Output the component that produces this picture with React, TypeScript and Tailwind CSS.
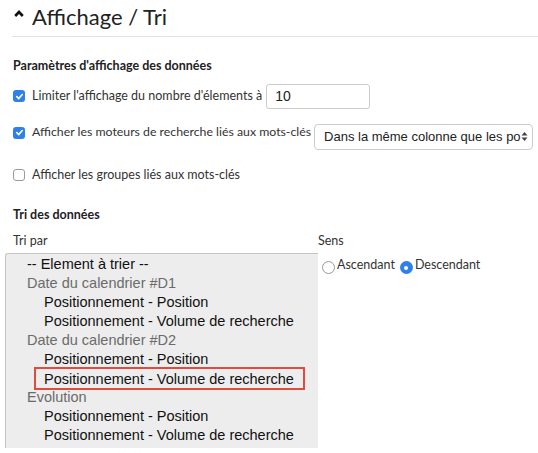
import React from "react";

// Options of the sort listbox
const options = [
  { label: "-- Element à trier --", kind: "item", indent: false },
  { label: "Date du calendrier #D1", kind: "group" },
  { label: "Positionnement - Position", kind: "item", indent: true },
  { label: "Positionnement - Volume de recherche", kind: "item", indent: true },
  { label: "Date du calendrier #D2", kind: "group" },
  { label: "Positionnement - Position", kind: "item", indent: true },
  { label: "Positionnement - Volume de recherche", kind: "item", indent: true, selected: true },
  { label: "Evolution", kind: "group" },
  { label: "Positionnement - Position", kind: "item", indent: true },
  { label: "Positionnement - Volume de recherche", kind: "item", indent: true },
];

function Check({ checked }: { checked: boolean }) {
  return checked ? (
    <span className="w-[12px] h-[12px] rounded-[3px] bg-[#2f80ed] flex items-center justify-center shrink-0">
      <svg width="9" height="9" viewBox="0 0 10 10">
        <path d="M2 5.2 L4.2 7.3 L8 2.8" stroke="white" strokeWidth="1.8" fill="none" strokeLinecap="round" strokeLinejoin="round" />
      </svg>
    </span>
  ) : (
    <span className="w-[12px] h-[12px] rounded-[3px] border border-[#9a9a9a] bg-white shrink-0" />
  );
}

export default function App() {
  return (
    <div className="w-[538px] h-[453px] bg-white overflow-hidden text-[#333] font-['Lato',sans-serif]">
      {/* Section heading */}
      <div className="flex items-center h-[37px] pl-[2px] border-b border-[#e3e3e3] ml-[12px]">
        <svg width="10" height="7" viewBox="0 0 10 7" className="mr-[8px] -mt-[9px]">
          <path d="M1.2 6 L5 2 L8.8 6" stroke="#111" strokeWidth="2.6" fill="none" />
        </svg>
        <span className="text-[22px] leading-none text-[#222] -mt-[2px]">Affichage / Tri</span>
      </div>

      <div className="pl-[13px] pt-[23px]">
        <div className="text-[12.5px] font-bold text-[#222] leading-none">Paramètres d'affichage des données</div>

        <div className="flex items-center mt-[11px] h-[25px]">
          <Check checked />
          <span className="ml-[7px] text-[12.5px] whitespace-nowrap">Limiter l'affichage du nombre d'élements à</span>
          <div className="ml-[4px] w-[104px] h-[25px] border border-[#ccc] rounded-[3px] flex items-center pl-[8px] text-[14px] font-['Liberation_Sans',sans-serif] text-[#222]">
            10
          </div>
        </div>

        <div className="flex items-center mt-[15px] h-[26px]">
          <div className="self-start flex items-center h-[18px]">
            <Check checked />
            <span className="ml-[7px] text-[12.3px] whitespace-nowrap">Afficher les moteurs de recherche liés aux mots-clés</span>
          </div>
          <div className="ml-[3px] w-[219px] h-[26px] border border-[#ccc] rounded-[4px] flex items-center pl-[9px] pr-[4px] text-[13px] font-['Liberation_Sans',sans-serif] text-[#222] shrink-0">
            <span className="flex-1 whitespace-nowrap overflow-hidden">Dans la même colonne que les po</span>
            <svg width="7" height="11" viewBox="0 0 7 11" className="shrink-0">
              <path d="M3.5 1 L6.5 4.5 H0.5 Z M3.5 10 L6.5 6.5 H0.5 Z" fill="#444" />
            </svg>
          </div>
        </div>

        <div className="flex items-center mt-[16px]">
          <Check checked={false} />
          <span className="ml-[7px] text-[12.5px] whitespace-nowrap">Afficher les groupes liés aux mots-clés</span>
        </div>

        <div className="text-[12.5px] font-bold text-[#222] leading-none mt-[25px]">Tri des données</div>

        <div className="flex mt-[10px] text-[12.5px]">
          <div className="w-[305px]">Tri par</div>
          <div>Sens</div>
        </div>
      </div>

      {/* Sort listbox + direction */}
      <div className="flex mt-[2px]">
        <div className="ml-[5px] w-[313px] h-[195px] bg-[#ededed] border-l border-t border-[#c4c4c4] rounded-tl-[3px] pt-[1px] font-['Liberation_Sans',sans-serif] text-[14.5px]">
          {options.map((o, i) =>
            o.kind === "group" ? (
              <div key={i} className="h-[19px] leading-[19px] pl-[21px] text-[#6b6b6b] whitespace-nowrap">
                {o.label}
              </div>
            ) : (
              <div key={i} className={`h-[19px] leading-[19px] whitespace-nowrap ${o.indent ? "pl-[38px]" : "pl-[21px]"} text-[#111]`}>
                {o.selected ? (
                  <span className="-ml-[10px] inline-block w-[271px] h-[23px] leading-[20px] border-2 border-[#e14b3b] pl-[8px] -my-[2px]">
                    {o.label}
                  </span>
                ) : (
                  o.label
                )}
              </div>
            )
          )}
        </div>

        <div className="flex items-center h-[24px] ml-[4px] text-[12.5px] pt-[2px]">
          <span className="w-[13px] h-[13px] rounded-full border border-[#999] bg-white mt-[4px]" />
          <span className="ml-[2px]">Ascendant</span>
          <span className="ml-[5px] w-[13px] h-[13px] rounded-full bg-[#2f80ed] flex items-center justify-center mt-[4px]">
            <span className="w-[4px] h-[4px] rounded-full bg-white" />
          </span>
          <span className="ml-[2px]">Descendant</span>
        </div>
      </div>
    </div>
  );
}
